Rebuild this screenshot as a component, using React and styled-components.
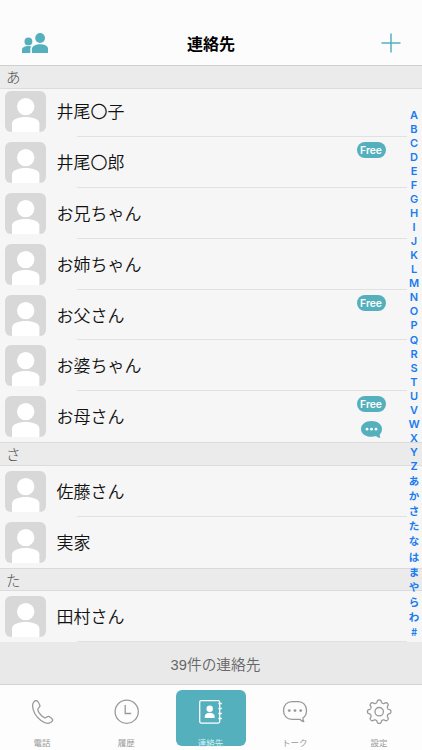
import React, { Fragment } from 'react';
import styled, { createGlobalStyle } from 'styled-components';

const TEAL = '#54b0bd';

const GlobalStyle = createGlobalStyle`
  * {
    box-sizing: border-box;
  }

  body {
    margin: 0;
    overflow: hidden;
    font-family: 'Noto Sans CJK JP', sans-serif;
  }
`;

const Screen = styled.div`
  position: relative;
  display: flex;
  flex-direction: column;
  width: 422px;
  height: 750px;
  overflow: hidden;
  background: #f6f6f6;

  > * {
    flex-shrink: 0;
  }
`;

const Header = styled.header`
  display: grid;
  grid-template-columns: 1fr auto 1fr;
  align-items: center;
  height: 66px;
  padding: 20px 21px 0 22px;
  border-bottom: 1px solid #cfcfcf;
  background: #fcfcfc;
`;

const Title = styled.h1`
  margin: 0 1px 0 0;
  color: #000;
  font-size: 16px;
  font-weight: 700;
  line-height: 24px;
`;

const IconButton = styled.button`
  display: flex;
  justify-self: ${props => props.$side};
  padding: 1px 0 0;
  border: none;
  background: none;
  cursor: pointer;
`;

const SectionTitle = styled.h2`
  position: relative;
  z-index: 1;
  height: ${props => (props.$pinned ? 23 : 23.5)}px;
  margin: 0 0 ${props => (props.$pinned ? -3 : 0)}px;
  padding-left: 6px;
  border-top: ${props => (props.$pinned ? 0 : 1)}px solid #dadada;
  border-bottom: 1px solid #dcdcdc;
  background: #ebebeb;
  color: #505050;
  font-size: 14.5px;
  font-weight: 300;
  line-height: 22px;
`;

const Row = styled.div`
  display: flex;
  height: 50.9px;
  padding-left: 5px;
`;

const AvatarBox = styled.svg`
  flex: none;
  width: 41px;
  height: 41px;
  margin-top: 5px;
  border-radius: 6px;
  background: #d8d8d8;
`;

const Name = styled.span`
  flex: 1;
  margin-left: 10.5px;
  color: #111;
  font-size: 17px;
  font-weight: 350;
  line-height: 49px;
`;

const Badges = styled.div`
  display: flex;
  flex-direction: column;
  align-items: center;
  width: 30px;
  margin: 5px 36px 0 0;
`;

const Free = styled.span`
  width: 29px;
  height: 16px;
  margin-bottom: 9px;
  border-radius: 8px;
  background: ${TEAL};
  color: #fff;
  font-family: Inter, sans-serif;
  font-size: 10.3px;
  font-weight: 600;
  line-height: 16px;
  text-align: center;
`;

const Divider = styled.hr`
  width: 330px;
  height: 1px;
  margin: -1px 0 0 77px;
  border: none;
  background: #e1e1e4;
`;

const Count = styled.div`
  height: 43px;
  border-bottom: 1px solid #d2d2d2;
  background: #e9e9e9;
  color: #666;
  font-family: 'Liberation Sans', 'Noto Sans CJK JP', sans-serif;
  font-size: 14.7px;
  font-weight: 350;
  line-height: 46px;
  text-align: center;
  padding-left: 9px;
`;

const IndexBar = styled.nav`
  position: absolute;
  top: 108px;
  right: 0;
  z-index: 2;
  display: flex;
  flex-direction: column;
  width: 16px;
  color: #1a7cf0;
  text-align: center;
`;

const Letter = styled.span`
  height: ${props => (props.$kana ? 15.15 : 14.04)}px;
  font-family: ${props => (props.$kana ? "'Noto Sans CJK JP'" : 'Inter')},
    sans-serif;
  font-size: ${props => (props.$kana ? 10.5 : 11)}px;
  font-weight: ${props => (props.$kana ? 700 : 600)};
  line-height: ${props => (props.$kana ? 15.15 : 14.04)}px;
`;

const TabBar = styled.footer`
  display: grid;
  grid-template-columns: repeat(5, 70px);
  justify-content: space-between;
  height: 65px;
  padding: 5px 8px 0 7px;
  background: #fdfdfd;
`;

const Tab = styled.div`
  display: flex;
  flex-direction: column;
  align-items: center;
  height: 56.5px;
  padding-top: 8px;
  border-radius: 6px;
  background: ${props => (props.$active ? TEAL : 'transparent')};
  color: ${props => (props.$active ? '#fff' : '#999')};

  svg {
    flex: none;
  }
`;

const TabLabel = styled.span`
  margin-top: 10px;
  color: ${props => (props.$active ? '#d5f1f5' : '#999')};
  font-size: 8.5px;
  font-weight: 400;
  line-height: 12px;
`;

const PeopleIcon = () => (
  <svg width="26" height="20" viewBox="0 0 26 20" fill={TEAL}>
    <circle cx="6.4" cy="8.4" r="3.9" />
    <circle cx="18.1" cy="5" r="4.9" />
    <path d="M0 20v-3.2c0-2.6 3.2-3.7 6.4-3.7 1 0 1.8.1 2.7.3-.6.8-.8 1.700-.8 2.900V20z" />
    <path d="M9.900 20v-3.700c0-3.400 4-5 8.200-5s8 1.600 8 5V20z" />
  </svg>
);

const PlusIcon = () => (
  <svg width="20" height="20" stroke={TEAL} strokeWidth="1.5">
    <path d="M10 .5v19M.5 10h19" />
  </svg>
);

const Avatar = () => (
  <AvatarBox viewBox="0 0 41 41" fill="#fff">
    <circle cx="20.7" cy="15.6" r="8.7" />
    <path d="M7 41v-8.500c0-4.200 6.500-6.500 13.700-6.500s13.700 2.300 13.700 6.500V41z" />
  </AvatarBox>
);

const BubbleIcon = () => (
  <svg width="21" height="18" viewBox="0 0 21 18">
    <path
      d="M10.500 0C4.500 0 0 3.300 0 8s4.500 7.800 10.500 7.800c1.700 0 3.200-.2 4.500-.7 1.200 1.200 2.700 1.900 4.400 1.900-.6-1.100-.8-2.500-.5-3.700C20.200 11.900 21 10.100 21 8c0-4.700-4.500-8-10.500-8z"
      fill={TEAL}
    />
    <g fill="#fff">
      <circle cx="6" cy="8.2" r="1.4" />
      <circle cx="10.5" cy="8.2" r="1.4" />
      <circle cx="15" cy="8.2" r="1.4" />
    </g>
  </svg>
);

const TabIcon = ({ children }) => (
  <svg
    width="26"
    height="28"
    viewBox="0 0 26 28"
    fill="none"
    stroke="currentColor"
    strokeWidth="1.3"
    strokeLinejoin="round"
  >
    {children}
  </svg>
);

const PhoneIcon = () => (
  <TabIcon>
    <path d="M4.500 4.300C5.600 3 6.800 2 8 2.700c1.300 1 2.500 3 3 5 .2 1.500-2.300 2.300-2.200 3.900.4 3 4.300 7.400 7 8.200 1.600.3 2.300-1.800 3.800-1.500 1.400.4 3 1.800 3.900 3 .6 1-.6 2.300-1.900 3.200-2.400 1.500-6.200.7-9.600-1.900C7.300 19 4 13.300 3.600 8.300c-.1-1.600.1-3 .9-4z" />
  </TabIcon>
);

const ClockIcon = () => (
  <TabIcon>
    <circle cx="13.7" cy="13.7" r="11.6" />
    <path d="M12.200 7v8.500h6" strokeLinejoin="miter" />
  </TabIcon>
);

const ContactsIcon = () => (
  <TabIcon>
    <rect x="1.7" y="2.7" width="20" height="22.4" rx="1.5" />
    <path d="M20.400 5.500h3.400M20.400 10.500h3.400M20.400 15.500h3.400M20.400 20.500h3.400" />
    <g fill="currentColor" stroke="none">
      <circle cx="11.7" cy="10.8" r="3.2" />
      <path d="M6.800 20v-1.700c0-2.300 2.200-3.500 4.900-3.500s4.900 1.200 4.900 3.500V20z" />
    </g>
  </TabIcon>
);

const TalkIcon = () => (
  <TabIcon>
    <path d="M10 3.600h6.200c5 0 8.300 3.700 8.300 9 0 3.300-1.300 6-3.600 7.500 0 1.300.3 2.500.9 3.500-1.600-.2-2.900-1-3.700-2.300H10c-5.200 0-8.500-3.500-8.500-8.700S4.800 3.600 10 3.600z" />
    <g fill="currentColor" stroke="none">
      <circle cx="7.3" cy="12.6" r="1.4" />
      <circle cx="13" cy="12.6" r="1.4" />
      <circle cx="18.7" cy="12.6" r="1.4" />
    </g>
  </TabIcon>
);

// eight rounded teeth around (13.2, 13.7)
const gearPoints = Array.from({ length: 160 }, (_, i) => {
  const angle = (i / 160) * Math.PI * 2;
  const radius = 10.4 + 1.4 * Math.tanh(1.8 * Math.cos(8 * angle));
  const x = 13.2 + radius * Math.sin(angle);
  const y = 13.7 - radius * Math.cos(angle);
  return `${x.toFixed(2)},${y.toFixed(2)}`;
}).join(' ');

const GearIcon = () => (
  <TabIcon>
    <polygon points={gearPoints} />
    <circle cx="13.2" cy="13.7" r="4.2" />
  </TabIcon>
);

const sections = [
  {
    title: 'あ',
    contacts: [
      { name: '井尾〇子' },
      { name: '井尾〇郎', free: true },
      { name: 'お兄ちゃん' },
      { name: 'お姉ちゃん' },
      { name: 'お父さん', free: true },
      { name: 'お婆ちゃん' },
      { name: 'お母さん', free: true, talk: true },
    ],
  },
  { title: 'さ', contacts: [{ name: '佐藤さん' }, { name: '実家' }] },
  { title: 'た', contacts: [{ name: '田村さん' }] },
];

const tabs = [
  { label: '電話', Icon: PhoneIcon },
  { label: '履歴', Icon: ClockIcon },
  { label: '連絡先', Icon: ContactsIcon, active: true },
  { label: 'トーク', Icon: TalkIcon },
  { label: '設定', Icon: GearIcon },
];

const letters = 'ABCDEFGHIJKLMNOPQRSTUVWXYZ'.split('');
const kana = 'あかさたなはまやらわ#'.split('');

const App = () => (
  <Screen>
    <GlobalStyle />
    <Header>
      <IconButton $side="start" aria-label="グループ">
        <PeopleIcon />
      </IconButton>
      <Title>連絡先</Title>
      <IconButton $side="end" aria-label="追加">
        <PlusIcon />
      </IconButton>
    </Header>

    {sections.map((section, i) => (
      <Fragment key={section.title}>
        <SectionTitle $pinned={i === 0}>{section.title}</SectionTitle>
        {section.contacts.map((contact, j) => (
          <Fragment key={contact.name}>
            <Row>
              <Avatar />
              <Name>{contact.name}</Name>
              {contact.free && (
                <Badges>
                  <Free>Free</Free>
                  {contact.talk && <BubbleIcon />}
                </Badges>
              )}
            </Row>
            {(i === 2 || j < section.contacts.length - 1) && <Divider />}
          </Fragment>
        ))}
      </Fragment>
    ))}
    <Count>39件の連絡先</Count>

    <TabBar>
      {tabs.map(({ label, Icon, active }) => (
        <Tab key={label} $active={active}>
          <Icon />
          <TabLabel $active={active}>{label}</TabLabel>
        </Tab>
      ))}
    </TabBar>

    <IndexBar>
      {letters.map(letter => (
        <Letter key={letter}>{letter}</Letter>
      ))}
      {kana.map(letter => (
        <Letter key={letter} $kana>
          {letter}
        </Letter>
      ))}
    </IndexBar>
  </Screen>
);

export default App;
